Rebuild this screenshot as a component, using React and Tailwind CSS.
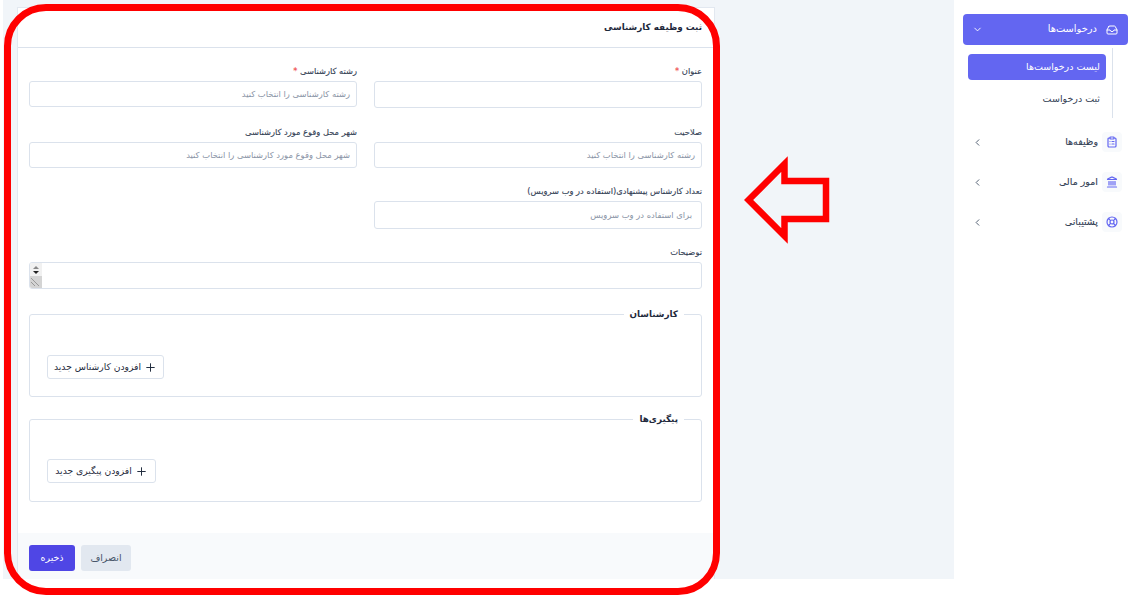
import { ChevronDown, ChevronLeft, ClipboardList, Inbox, Landmark, LifeBuoy, Plus } from 'lucide-react';

const fontStack = { fontFamily: '"DejaVu Sans", "Noto Sans", sans-serif' };

function Label({ text, required }) {
	return (
		<label className="block text-[8.3px] leading-[12px] font-medium text-[#334155] [-webkit-text-stroke:0.12px] mb-[4px]">
			{text}
			{required && <span className="text-[#ef4444]"> *</span>}
		</label>
	);
}

function Field({ label, required, placeholder, inputClass = 'h-[26px] pr-[6px]' }) {
	return (
		<div>
			<Label text={label} required={required} />
			<div className={`${inputClass} flex items-center bg-white border border-[#dbe2ec] rounded-[3px] text-[8.4px] text-[#8a94a6]`}>
				{placeholder}
			</div>
		</div>
	);
}

function Group({ title, button, buttonClass, className = '' }) {
	return (
		<fieldset className={`border border-[#dbe2ec] rounded-[3px] px-[17px] ${className}`}>
			<legend className="px-[6px] text-[8.8px] leading-[14px] font-bold text-[#1e293b]">{title}</legend>
			<div className={`${buttonClass} h-[24px] mr-auto flex items-center justify-center gap-[3px] bg-white border border-[#dbe2ec] rounded-[3px] text-[9.2px] text-[#1e293b]`}>
				<Plus size={13} strokeWidth={1.8} />
				<span>{button}</span>
			</div>
		</fieldset>
	);
}

function MenuItem({ title, Icon }) {
	return (
		<div className="h-[20px] mb-[20px] flex items-center pl-[9px] pr-[6px]">
			<ChevronLeft size={11} className="text-[#475569]" />
			<span className="ml-auto text-[9.5px] font-medium text-[#334155] [-webkit-text-stroke:0.12px]">{title}</span>
			<div className="ml-[4px] w-[20px] h-[20px] flex items-center justify-center rounded-[4px] bg-[#f8fafc]">
				<Icon size={12} strokeWidth={2.4} className="text-[#6366f1]" />
			</div>
		</div>
	);
}

export default function App() {
	return (
		<div className="relative w-[1135px] h-[599px] overflow-hidden bg-white" style={fontStack}>
			<div className="flex h-[579px]">
				<main className="ml-[3px] w-[951px] bg-[#f1f5f9] pt-[7px] pl-[14px]">
					<div dir="rtl" className="w-[698px] h-[572px] flex flex-col bg-white border border-[#e2e8f0] border-b-0">
						<header className="h-[40px] shrink-0 flex items-center pr-[12px] pl-[11px] border-b border-[#dbe2ec] text-[8.8px] font-bold text-[#1e293b]">
							ثبت وظیفه کارشناسی
						</header>
						<div className="flex-1 pr-[12px] pl-[11px] pt-[17px]">
							<div className="grid grid-cols-2 gap-x-[17px]">
								<Field label="عنوان" required inputClass="h-[27px]" />
								<Field label="رشته کارشناسی" required placeholder="رشته کارشناسی را انتخاب کنید" />
							</div>
							<div className="grid grid-cols-2 gap-x-[17px] mt-[18px]">
								<Field label="صلاحیت" placeholder="رشته کارشناسی را انتخاب کنید" />
								<Field label="شهر محل وقوع مورد کارشناسی" placeholder="شهر محل وقوع مورد کارشناسی را انتخاب کنید" />
							</div>
							<div className="grid grid-cols-2 gap-x-[17px] mt-[17px]">
								<Field label="تعداد کارشناس پیشنهادی(استفاده در وب سرویس)" placeholder="برای استفاده در وب سرویس" inputClass="h-[28px] pr-[9px]" />
							</div>
							<div className="mt-[17px]">
								<Label text="توضیحات" />
								<div className="h-[27px] flex justify-end bg-white border border-[#dbe2ec] rounded-[3px] overflow-hidden">
									<div className="w-[12px] flex flex-col bg-[#f1f1f1]">
										<div className="h-[14px] flex flex-col items-center justify-center gap-[2px]">
											<span className="w-0 h-0 border-x-[3px] border-x-transparent border-b-[3px] border-b-[#888]" />
											<span className="w-0 h-0 border-x-[3px] border-x-transparent border-t-[3px] border-t-[#222]" />
										</div>
										<div className="flex-1 bg-[#d4d4d4]">
											<svg width="12" height="12" viewBox="0 0 12 12" stroke="#8a8a8a" strokeWidth="0.8">
												<path d="M1 2 L9 10 M1 6 L5 10" />
											</svg>
										</div>
									</div>
								</div>
							</div>
							<Group className="mt-[18px] h-[90px]" title="کارشناسان" button="افزودن کارشناس جدید" buttonClass="w-[117px] mt-[34px]" />
							<Group className="mt-[15px] h-[90px]" title="پیگیری‌ها" button="افزودن پیگیری جدید" buttonClass="w-[109px] mt-[33px]" />
						</div>
						<footer className="h-[46px] shrink-0 flex items-start justify-end gap-[6px] pt-[12px] pr-[12px] pl-[11px] bg-[#f8fafc]">
							<div className="w-[50px] h-[26px] flex items-center justify-center rounded-[3px] bg-[#e2e8f0] text-[9.5px] text-[#475569]">انصراف</div>
							<div className="w-[46px] h-[26px] flex items-center justify-center rounded-[3px] bg-[#4f46e5] text-[9.5px] font-medium text-white">ذخیره</div>
						</footer>
					</div>
				</main>
				<aside dir="ltr" className="w-[181px] bg-white pt-[14px] pl-[9px] pr-[7px]">
					<div className="h-[31px] flex items-center pl-[9px] pr-[10px] rounded-[4px] bg-[#6366f1] text-white">
						<ChevronDown size={11} />
						<span className="ml-auto text-[9.9px] font-medium">درخواست‌ها</span>
						<Inbox size={12} strokeWidth={2} className="ml-[9px]" />
					</div>
					<div className="mt-[3px] mr-[15px] ml-[5px] pr-[6px] h-[70px] pt-[6px] border-r border-[#dbe2ec]">
						<div className="h-[26px] flex items-center justify-end pr-[6px] rounded-[4px] bg-[#6366f1] text-[9.5px] font-medium text-white">لیست درخواست‌ها</div>
						<div className="h-[26px] mt-[6px] flex items-center justify-end pr-[6px] text-[9.5px] font-medium text-[#334155]">ثبت درخواست</div>
					</div>
					<div className="mt-[14px]">
						<MenuItem title="وظیفه‌ها" Icon={ClipboardList} />
						<MenuItem title="امور مالی" Icon={Landmark} />
						<MenuItem title="پشتیبانی" Icon={LifeBuoy} />
					</div>
				</aside>
			</div>
			{/* annotation drawn over the screenshot */}
			<div className="absolute left-[4px] top-[4px] w-[716px] h-[591px] border-[7px] border-[#ff0000] rounded-[42px] pointer-events-none" />
			<svg className="absolute left-[740px] top-[150px]" width="95" height="100" viewBox="0 0 95 100" fill="none">
				<path d="M44.5 14 L8.6 50 L44.5 86 L44.5 69 L86 69 L86 31 L44.5 31 Z" stroke="#ff0000" strokeWidth="6.5" strokeLinejoin="miter" />
			</svg>
		</div>
	);
}
